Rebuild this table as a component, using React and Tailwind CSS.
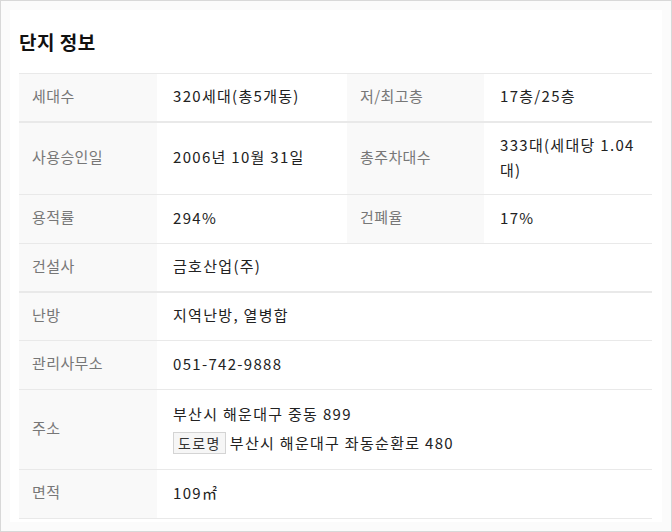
import React from "react"

const rows = [
  { label: "세대수", value: "320세대(총5개동)", label2: "저/최고층", value2: "17층/25층", h: "h-[48px]" },
  { label: "사용승인일", value: "2006년 10월 31일", label2: "총주차대수", value2: "333대(세대당 1.04대)", h: "h-[73px]", thick: true },
  { label: "용적률", value: "294%", label2: "건폐율", value2: "17%", h: "h-[49px]" },
  { label: "건설사", value: "금호산업(주)", h: "h-[48px]" },
  { label: "난방", value: "지역난방, 열병합", h: "h-[49px]", thick: true },
  { label: "관리사무소", value: "051-742-9888", h: "h-[49px]" },
]

const labelCls = "bg-[#f9f9f9] pl-[13px] pr-3 pb-[3px] text-[15px] tracking-[0.4px] text-[#777] font-normal text-left align-middle"
const valueCls = "pl-4 pr-[12px] pb-[3px] text-[15px] tracking-[1.3px] text-[#222] align-middle leading-[25px]"

const App = () => {
  return (
    <div
      className="w-[672px] h-[532px] border border-[#d8d8d8] bg-[#fbfbfb] p-[9px]"
      style={{ fontFamily: '"Noto Sans CJK KR", "Noto Sans", sans-serif' }}
    >
      <div className="h-full bg-white px-[9px] pt-[18px]">
        <h2 className="text-[19px] font-bold tracking-[0.5px] text-[#111] leading-[28px] mb-[17px]">단지 정보</h2>

        <table className="w-[633px] border-collapse table-fixed">
          <colgroup>
            <col className="w-[138px]" />
            <col className="w-[190px]" />
            <col className="w-[137px]" />
            <col className="w-[168px]" />
          </colgroup>
          <tbody>
            {rows.map((row) => (
              <tr
                key={row.label}
                className={`${row.h} border-[#e9e9e9] ${row.thick ? "border-t-2" : "border-t"}`}
              >
                <th className={labelCls}>{row.label}</th>
                {row.label2 ? (
                  <>
                    <td className={valueCls}>{row.value}</td>
                    <th className={labelCls}>{row.label2}</th>
                    <td className={valueCls}>{row.value2}</td>
                  </>
                ) : (
                  <td className={valueCls} colSpan={3}>{row.value}</td>
                )}
              </tr>
            ))}

            {/* 주소 */}
            <tr className="h-[80px] border-t border-[#e9e9e9]">
              <th className={labelCls}>주소</th>
              <td className={valueCls} colSpan={3}>
                <div className="leading-[24px]">부산시 해운대구 중동 899</div>
                <div className="flex items-center gap-[4px] mt-[5px]">
                  <span className="border border-[#d4d4d4] bg-[#f6f6f6] px-[4px] text-[14px] tracking-[1.4px] leading-[20px] text-[#333]">
                    도로명
                  </span>
                  <span className="leading-[24px]">부산시 해운대구 좌동순환로 480</span>
                </div>
              </td>
            </tr>

            <tr className="h-[49px] border-t border-b border-[#e9e9e9]">
              <th className={labelCls}>면적</th>
              <td className={valueCls} colSpan={3}>109㎡</td>
            </tr>
          </tbody>
        </table>
      </div>
    </div>
  )
}

export default App
